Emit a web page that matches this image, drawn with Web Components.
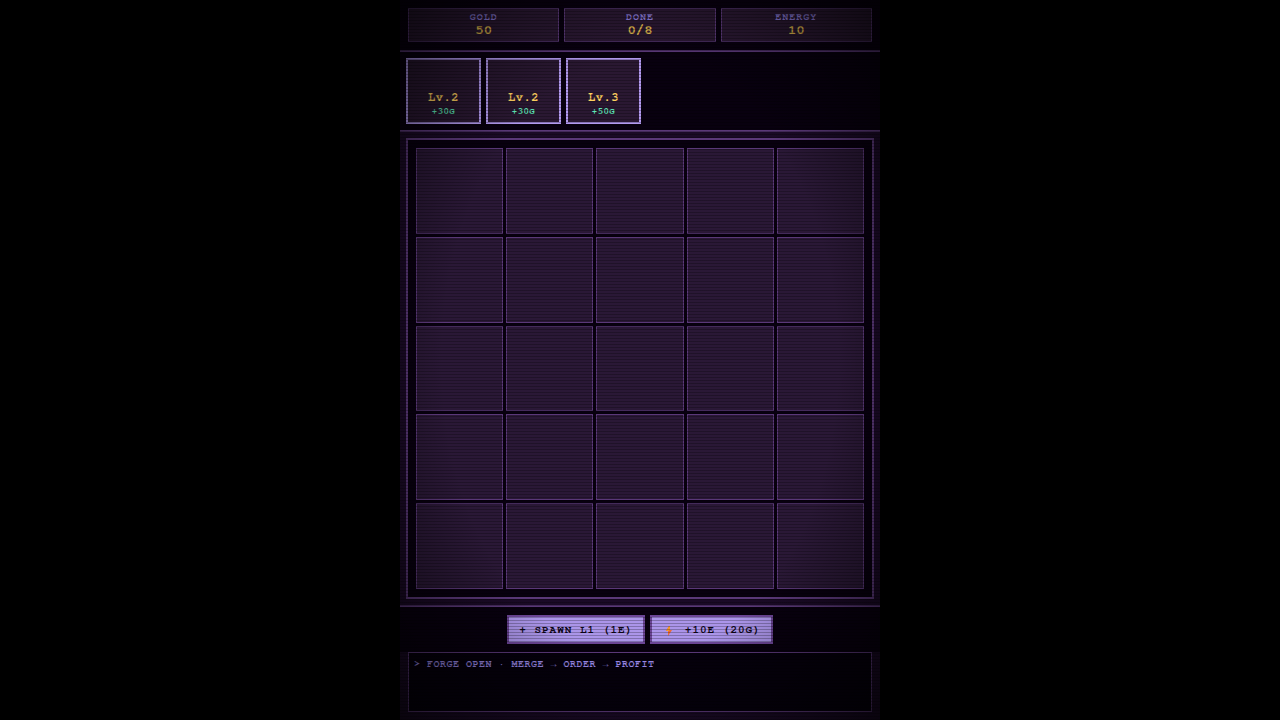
<!DOCTYPE html>
<html lang="en">
<head>
<meta charset="utf-8">
<title>Forge</title>
<style>
html, body { margin: 0; height: 100%; background: #000; }
body { font-family: FreeMono, "Courier New", "Liberation Mono", monospace; font-weight: bold; letter-spacing: 0.05em; }
</style>
</head>
<body>
<forge-app></forge-app>
<script>
const define = (name, html) => customElements.define(name, class extends HTMLElement {
  constructor() {
    super();
    const t = document.createElement('template');
    t.innerHTML = html;
    this.attachShadow({ mode: 'open' }).append(t.content.cloneNode(true));
  }
});

define('forge-stat', `
<style>
:host { display: block; flex: 1 1 0; box-sizing: border-box; height: 34px; border: 1px solid #5a3878; background: #2a1832; text-align: center; padding: 3px; }
.label { font-size: 10px; line-height: 11px; letter-spacing: 1px; color: #8a7ad8; }
.value { font-size: 14px; line-height: 15px; letter-spacing: 0; color: #e0b84e; }
</style>
<div class="label"><slot name="label"></slot></div>
<div class="value"><slot></slot></div>`);

define('forge-order', `
<style>
:host { display: flex; flex-direction: column; justify-content: flex-end; align-items: center; box-sizing: border-box; width: 75px; height: 66px; padding: 4px; border: 2px solid #b39af0; background: #2a1832; }
.level { font-size: 12px; line-height: 15px; letter-spacing: 0.05em; color: #ffd060; }
.reward { font-size: 9px; line-height: 13px; letter-spacing: 0.05em; color: #5fe8b8; }
</style>
<div class="level"><slot></slot></div>
<div class="reward"><slot name="reward"></slot></div>`);

define('forge-cell', `
<style>:host { display: block; box-sizing: border-box; border: 1px solid #5a3878; background: #2a1836; }</style>`);

define('forge-board', `
<style>
:host { display: grid; grid-template: repeat(5, 1fr) / repeat(5, 1fr); gap: 3px; box-sizing: border-box; padding: 8px; border: 2px solid #5a3878; background: #08000f; }
</style><slot></slot>`);

define('forge-button', `
<style>
:host { display: block; }
button { display: flex; align-items: center; box-sizing: border-box; height: 29px; padding: 0 10px; border: 2px solid #6b4596; border-radius: 0; background: #ab95ea; color: #0d0618; font-family: inherit; font-size: 11px; font-weight: bold; line-height: 25px; letter-spacing: 1px; white-space: pre; }
</style><button type="button"><slot></slot></button>`);

define('forge-bolt', `
<style>
:host { display: block; flex: none; width: 15px; height: 14px; white-space: normal; }
svg { display: block; }
</style>
<svg width="15" height="14" viewBox="0 0 15 14" aria-hidden="true">
<path d="M7 3 L4 8 H6 L6 13 L10 7 H8 L8 3 Z" fill="#ef6a35"/>
<path d="M7 3 L4 8 H7 L8 6 L8 3 Z" fill="#f39a2b"/>
</svg>`);

define('forge-log', `
<style>
:host { display: block; box-sizing: border-box; height: 60px; margin: 0 8px 8px; padding: 4px 5px; border: 1px solid #5a3878; background: #05000c; font-size: 10px; line-height: 14px; letter-spacing: 0.05em; color: #9a88e8; }
::slotted(.arrow) { font-family: "Liberation Mono", monospace; line-height: 1; }
</style><slot></slot>`);

define('forge-app', `
<style>
:host { position: relative; display: flex; flex-direction: column; box-sizing: border-box; max-width: 480px; height: 100vh; margin: 0 auto; background: #1a0a26; }
:host::before, :host::after { content: ""; position: absolute; inset: 0; pointer-events: none; z-index: 1; }
:host::before { background: repeating-linear-gradient(0deg, rgba(0,0,0,.25) 0 1px, transparent 1px 3px); }
:host::after { background: radial-gradient(ellipse at center, transparent 58%, rgba(0,0,0,.65) 100%); }
header, nav, footer { display: flex; gap: 5px; background: #08000f; }
header { padding: 8px; border-bottom: 2px solid #5a3878; }
nav { padding: 6px; border-bottom: 2px solid #5a3878; }
forge-board { flex: 1; margin: 6px; }
footer { justify-content: center; padding: 8px; border-top: 2px solid #5a3878; }
</style>
<header>
<forge-stat><span slot="label">GOLD</span>50</forge-stat>
<forge-stat><span slot="label">DONE</span>0/8</forge-stat>
<forge-stat><span slot="label">ENERGY</span>10</forge-stat>
</header>
<nav>
<forge-order>Lv.2<span slot="reward">+30G</span></forge-order>
<forge-order>Lv.2<span slot="reward">+30G</span></forge-order>
<forge-order>Lv.3<span slot="reward">+50G</span></forge-order>
</nav>
<forge-board>${'<forge-cell></forge-cell>'.repeat(25)}</forge-board>
<footer>
<forge-button>+ SPAWN L1 (1E)</forge-button>
<forge-button><forge-bolt></forge-bolt> +10E (20G)</forge-button>
</footer>
<forge-log>&gt; FORGE OPEN · MERGE <span class="arrow">→</span> ORDER <span class="arrow">→</span> PROFIT</forge-log>`);
</script>
</body>
</html>
